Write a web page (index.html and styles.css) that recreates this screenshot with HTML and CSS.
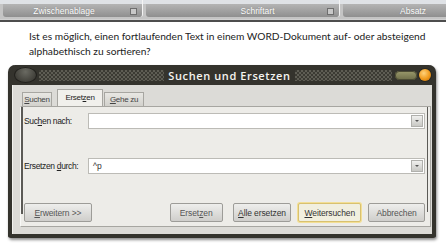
FILE: index.html
```html
<!DOCTYPE html>
<html lang="de">
<head>
    <meta charset="UTF-8">
    <title>Suchen und Ersetzen</title>
    <link rel="stylesheet" href="styles.css">
</head>
<body>
    <!-- Ribbon group labels -->
    <div class="ribbon">
        <div class="group group-clip">
            <span class="group-label">Zwischenablage</span>
            <span class="launcher"></span>
        </div>
        <div class="group group-font">
            <span class="group-label">Schriftart</span>
            <span class="launcher"></span>
        </div>
        <div class="group group-para">
            <span class="group-label">Absatz</span>
        </div>
    </div>

    <p class="question">Ist es möglich, einen fortlaufenden Text in einem WORD-Dokument auf- oder absteigend<br>alphabethisch zu sortieren?</p>

    <!-- Dialog window -->
    <div class="dialog">
        <div class="titlebar">
            <span class="orb"></span>
            <div class="title-strip">
                <span class="title">Suchen und Ersetzen</span>
            </div>
            <span class="pill"></span>
            <span class="close-dot"></span>
        </div>

        <div class="dialog-body">
            <div class="tabs">
                <span class="tab tab-find"><u>S</u>uchen</span>
                <span class="tab tab-replace active">Erset<u>z</u>en</span>
                <span class="tab tab-goto"><u>G</u>ehe zu</span>
            </div>

            <div class="panel">
                <div class="field">
                    <label>Suc<u>h</u>en nach:</label>
                    <div class="combo"><span class="combo-text"></span><span class="drop"></span></div>
                </div>
                <div class="field">
                    <label>Ersetzen <u>d</u>urch:</label>
                    <div class="combo"><span class="combo-text">^p</span><span class="drop"></span></div>
                </div>
                <div class="buttons">
                    <button class="btn btn-more"><u>E</u>rweitern &gt;&gt;</button>
                    <button class="btn btn-replace">Erset<u>z</u>en</button>
                    <button class="btn btn-all"><u>A</u>lle ersetzen</button>
                    <button class="btn btn-next default"><u>W</u>eitersuchen</button>
                    <button class="btn btn-cancel">Abbrechen</button>
                </div>
            </div>
        </div>
    </div>
</body>
</html>
```

FILE: styles.css
```css
/* Page */
body {
    margin: 0;
    width: 446px;
    height: 243px;
    overflow: hidden;
    background: #ffffff;
    font-family: "Liberation Sans", Arial, sans-serif;
}

/* Ribbon strip at the top */
.ribbon {
    display: flex;
    height: 22px;
    background: linear-gradient(#dfe2e6 0, #dfe2e6 4px, #c4c4c4 4px, #c4c4c4 19px, #d0d0d0 19px, #d0d0d0 20px, #4e4e4e 20px);
    padding-left: 3px;
    gap: 3px;
    overflow: hidden;
}

.group {
    position: relative;
    flex-shrink: 0;
    height: 17px;
    display: flex;
    align-items: center;
    justify-content: center;
    background: linear-gradient(#dfe2e6 0, #dfe2e6 4px, #b4b4b4 4px, #8f8f8f 17px);
    border-radius: 0 0 3px 3px;
    border-right: 1px solid #f4f4f4;
}

.group-clip { width: 139px; }
.group-font { width: 193px; }
.group-para { width: 140px; border-right: none; }

.group-label {
    margin-top: 4px;
    font-size: 8.5px;
    color: #ffffff;
    text-shadow: 0 0 1px rgba(0, 0, 0, 0.3);
}

.group-clip .group-label { margin-right: 17px; }
.group-font .group-label { margin-left: 30px; }

/* small dialog launcher square */
.launcher {
    position: absolute;
    right: 5px;
    top: 8px;
    width: 5px;
    height: 5px;
    border: 1px solid #6e6e6e;
    background: #c8c8c8;
}

/* Question text */
.question {
    margin: 7px 0 0 29px;
    white-space: nowrap;
    font-family: Lato, "Open Sans", sans-serif;
    font-size: 10.2px;
    line-height: 15px;
    color: #222222;
}

/* Dialog frame */
.dialog {
    margin: 6px 0 0 8px;
    width: 420px;
    border: 4px solid #34332d;
    border-top: none;
    border-radius: 7px 7px 3px 3px;
    background: #34332d;
    box-shadow: 1px 2px 3px rgba(0, 0, 0, 0.45);
}

.titlebar {
    display: flex;
    align-items: center;
    height: 20px;
}

.orb {
    width: 23px;
    height: 16px;
    margin-left: 2px;
    border-radius: 50%;
    background: radial-gradient(ellipse at 50% 30%, #6a6a62 0, #3e3d37 70%);
    box-shadow: inset 0 0 0 1px #22211d;
}

.title-strip {
    flex: 1;
    height: 11px;
    margin: 0 3px 0 2px;
    display: flex;
    justify-content: center;
    align-items: center;
    background: repeating-conic-gradient(#5e5d54 0 25%, #3b3a33 0 50%) 0 0 / 4px 4px;
}

.title {
    margin-left: 28px;
    padding: 0 4px;
    background: #34332d;
    color: #f4f4f0;
    font-family: "Open Sans", sans-serif;
    font-size: 11px;
    font-weight: 600;
    letter-spacing: 0.6px;
    line-height: 13px;
}

.pill {
    width: 22px;
    height: 9px;
    border-radius: 5px;
    background: linear-gradient(#9b9a6c, #6d6c48);
    box-shadow: inset 0 0 0 1px #4c4b34;
}

.close-dot {
    width: 12px;
    height: 12px;
    margin: 0 1px 0 2px;
    border-radius: 50%;
    background: radial-gradient(circle at 40% 35%, #ffd27a 0, #f09a1c 55%, #b66a0c 100%);
    box-shadow: 0 0 0 1px #2a2924;
}

/* Dialog body */
.dialog-body {
    background: #dcdbd7;
    padding: 2px 1px 7px 7px;
    border-left: 1px solid #f2f2ee;
}

.tabs {
    display: flex;
    align-items: flex-end;
    height: 19px;
    padding-left: 2px;
    font-size: 8px;
}

.tab {
    height: 13px;
    line-height: 13px;
    text-align: center;
    white-space: nowrap;
    color: #444444;
    background: linear-gradient(#e8e7e3, #d2d1cc);
    border: 1px solid #a7a6a1;
    border-bottom: none;
    letter-spacing: -0.3px;
}

.tab-find { width: 28px; margin-right: 5px; }
.tab-replace { width: 44px; margin-right: 1px; }
.tab-goto { width: 38px; }

.tab.active {
    height: 16px;
    line-height: 15px;
    background: #f1f0ec;
    color: #222222;
}

.panel {
    position: relative;
    background: #edece8;
    border: 1px solid #a7a6a1;
    border-left-color: #f8f8f6;
    padding: 6px 5px 4px 0;
    font-size: 8.5px;
    color: #222222;
}

/* dark edge lines along the panel sides */
.panel::before {
    content: "";
    position: absolute;
    left: 0;
    top: 0;
    width: 2px;
    height: 107px;
    background: #5b5a56;
}

.panel::after {
    content: "";
    position: absolute;
    right: 2px;
    top: 0;
    width: 1px;
    height: 105px;
    background: #5b5a56;
}

.field {
    display: flex;
    align-items: center;
    height: 16px;
    margin-bottom: 29px;
}

.field label {
    width: 64px;
    padding-left: 3px;
    letter-spacing: -0.35px;
}

.combo {
    flex: 1;
    height: 14px;
    display: flex;
    align-items: center;
    justify-content: space-between;
    background: #ffffff;
    border: 1px solid #bcbbb6;
}

.combo-text {
    padding-left: 4px;
    font-size: 8.5px;
    color: #333333;
}

.drop {
    width: 10px;
    height: 10px;
    margin-right: 1px;
    border: 1px solid #b0b0ac;
    background: linear-gradient(#f0f0ee, #c8c8c4);
    position: relative;
}

.drop::after {
    content: "";
    position: absolute;
    left: 3px;
    top: 4px;
    border-left: 2px solid transparent;
    border-right: 2px solid transparent;
    border-top: 2px solid #555555;
}

.buttons {
    display: flex;
    padding-left: 3px;
    gap: 7px;
}

.btn {
    height: 19px;
    padding: 0;
    font-family: "Liberation Sans", Arial, sans-serif;
    font-size: 8.5px;
    letter-spacing: -0.1px;
    color: #555555;
    background: linear-gradient(#eeeeec, #cfcecb);
    border: 1px solid #9d9c98;
    border-radius: 2px;
}

.btn-more { width: 68px; margin-right: 71px; }
.btn-replace { width: 53px; margin-right: 3px; }
.btn-all { width: 59px; color: #333333; }
.btn-next { width: 63px; color: #333333; }
.btn-cancel { width: 57px; }

.btn.default {
    background: #f1efdf;
    border: 1px solid #d8c170;
    box-shadow: 0 0 0 1px #f3df95;
}
```
